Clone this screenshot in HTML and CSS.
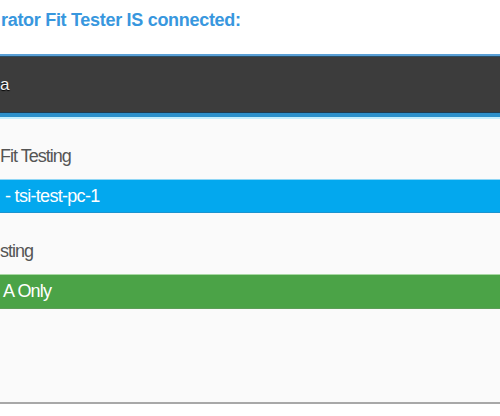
FILE: index.html
```html
<!DOCTYPE html>
<html>
<head>
<meta charset="utf-8">
<link rel="stylesheet" href="styles.css">
</head>
<body>
<div class="page">
  <h1 class="title">rator Fit Tester IS connected:</h1>
  <div class="panel">
    <div class="panel-head"><span class="head-text">a</span></div>
    <div class="panel-body">
      <div class="label">Fit Testing</div>
      <div class="bar bar-blue">- tsi-test-pc-1</div>
      <div class="label label-second">sting</div>
      <div class="bar bar-green">A Only</div>
    </div>
  </div>
</div>
</body>
</html>
```
FILE: styles.css
```css
html, body {
  margin: 0;
  padding: 0;
  background: #ffffff;
}
.page {
  width: 500px;
  font-family: "Liberation Sans", Arial, sans-serif;
}
.title {
  margin: 0;
  height: 54px;
  box-sizing: border-box;
  padding: 8px 0 0 1px;
  font-size: 18px;
  line-height: 24px;
  font-weight: bold;
  letter-spacing: -0.3px;
  color: #3897de;
}
.panel {
  border-bottom: 2px solid #a8a8a8;
}
.panel-head {
  background: #3c3c3c;
  border-top: 2px solid #5aa0d6;
  box-shadow: inset 0 1px 0 #2a4d66, inset 0 -1px 0 #1e3c52;
  height: 57px;
  border-bottom: 4px solid #2c90cb;
  line-height: 57px;
  font-size: 17px;
  color: #f2f2f2;
  text-shadow: 0 1px 1px #000;
}
.panel-body {
  background: #fafafa;
  border-top: 2px solid #c4efff;
  padding: 26px 0 93px;
}
.label {
  font-size: 18px;
  line-height: 22px;
  letter-spacing: -1px;
  color: #555555;
  margin-bottom: 12px;
}
.label-second {
  margin-top: 27px;
}
.bar {
  height: 34px;
  line-height: 34px;
  font-size: 18px;
  color: #ffffff;
  box-sizing: border-box;
}
.bar-blue {
  background: #03a8ee;
  border-top: 1px solid #8fd6f5;
  border-bottom: 1px solid #1b93cf;
  line-height: 32px;
  padding-left: 5px;
  letter-spacing: -0.7px;
}
.bar-green {
  height: 35px;
  background: #4ba347;
  border-top: 1px solid #a8d8a3;
  border-bottom: 1px solid #5c9e58;
  line-height: 33px;
  padding-left: 3px;
  letter-spacing: -0.8px;
}
```
